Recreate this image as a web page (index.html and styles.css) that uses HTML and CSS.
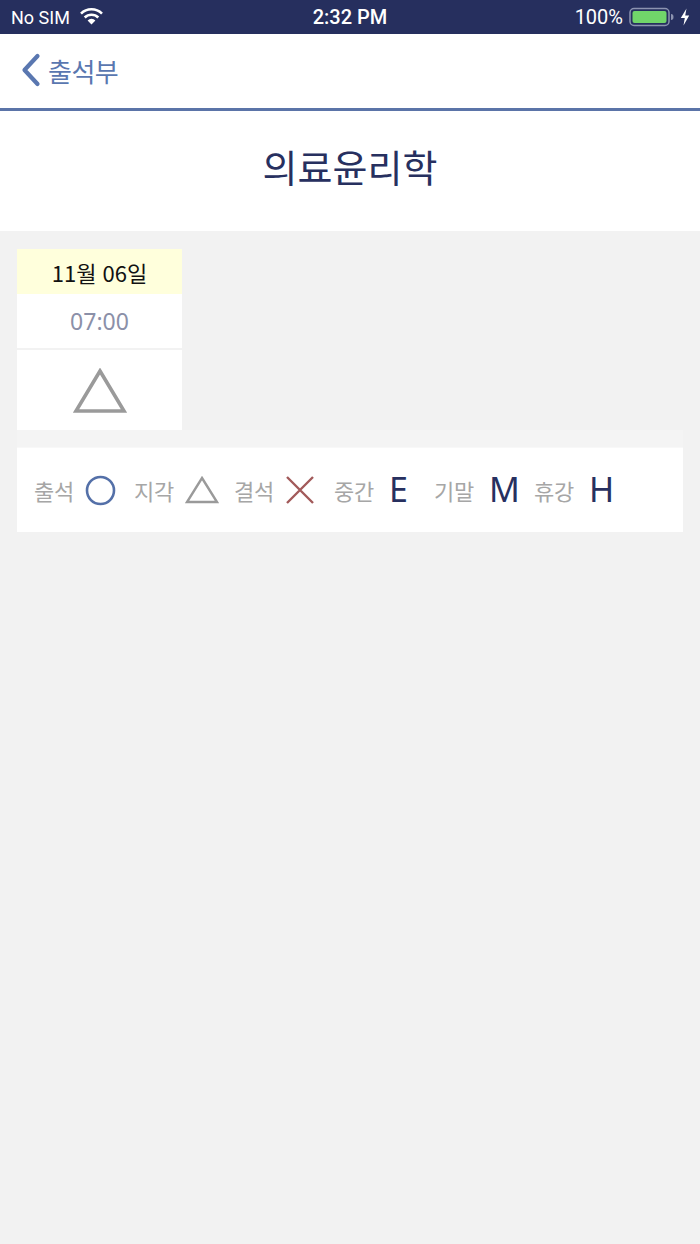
FILE: index.html
```html
<!DOCTYPE html>
<html lang="ko">
<head>
<meta charset="utf-8">
<title>출석부</title>
<link rel="stylesheet" href="styles.css">
</head>
<body>
<div class="screen">
  <div class="status">
    <div class="status-left">
      <span>No SIM</span>
      <svg class="wifi" width="25" height="18" viewBox="0 0 25 18">
        <path d="M12.5 17.5 L8.6 13.4 A5.6 5.6 0 0 1 16.4 13.4 Z" fill="#fff"/>
        <path d="M5.7 10.5 A9.7 9.7 0 0 1 19.3 10.5" fill="none" stroke="#fff" stroke-width="2.6"/>
        <path d="M2 6.6 A15 15 0 0 1 23 6.6" fill="none" stroke="#fff" stroke-width="2.6"/>
      </svg>
    </div>
    <div class="status-time">2:32 PM</div>
    <div class="status-right">
      <span class="pct">100%</span>
      <svg width="46" height="20" viewBox="0 0 46 20">
        <rect x="1" y="1.5" width="39" height="17" rx="4" fill="none" stroke="#8c93b0" stroke-width="1.5"/>
        <rect x="3.5" y="4" width="34" height="12" rx="2" fill="#71d56a"/>
        <path d="M42 7 Q44.5 7 44.5 10 Q44.5 13 42 13 Z" fill="#8c93b0"/>
      </svg>
      <svg width="10" height="18" viewBox="0 0 10 18">
        <path d="M6.5 0.5 L0.8 10 L4.8 10 L3.5 17.5 L9.2 7.5 L5.2 7.5 Z" fill="#fff"/>
      </svg>
    </div>
  </div>
  <div class="nav">
    <svg class="chev" width="22" height="34" viewBox="0 0 22 34">
      <path d="M17.5 3 L4.5 17 L17.5 31" fill="none" stroke="#5a77b0" stroke-width="4.2" stroke-linecap="round" stroke-linejoin="round"/>
    </svg>
    <span class="nav-title">출석부</span>
  </div>
  <div class="title">의료윤리학</div>
  <div class="content">
    <div class="card">
      <div class="card-date">11월 06일</div>
      <div class="card-time">07:00</div>
      <div class="card-mark">
        <svg width="54" height="46" viewBox="0 0 54 46">
          <path d="M27 3 L51 43 L3 43 Z" fill="none" stroke="#9a9a9a" stroke-width="3.6" stroke-linejoin="miter"/>
        </svg>
      </div>
    </div>
    <div class="band"></div>
    <div class="legend">
      <div class="item"><span class="lbl">출석</span>
        <svg width="31" height="31" viewBox="0 0 31 31"><circle cx="15.5" cy="15.5" r="13.5" fill="none" stroke="#5470a8" stroke-width="2.6"/></svg>
      </div>
      <div class="item"><span class="lbl">지각</span>
        <svg width="34" height="28" viewBox="0 0 34 28"><path d="M17 2 L32 26 L2 26 Z" fill="none" stroke="#9a9a9a" stroke-width="2.4"/></svg>
      </div>
      <div class="item"><span class="lbl">결석</span>
        <svg width="30" height="30" viewBox="0 0 30 30"><path d="M2 2 L28 28 M28 2 L2 28" fill="none" stroke="#a25a5a" stroke-width="2.4"/></svg>
      </div>
      <div class="item"><span class="lbl">중간</span><span class="letter">E</span></div>
      <div class="item"><span class="lbl">기말</span><span class="letter">M</span></div>
      <div class="item"><span class="lbl">휴강</span><span class="letter">H</span></div>
    </div>
  </div>
</div>
</body>
</html>
```

FILE: styles.css
```css
* { box-sizing: border-box; }
html, body { margin: 0; padding: 0; }
body {
  width: 700px;
  height: 1244px;
  background: #f2f2f2;
  font-family: "Noto Sans CJK KR", "Noto Sans", sans-serif;
  overflow: hidden;
}
.screen { display: flex; flex-direction: column; height: 1244px; }

.status {
  height: 34px;
  background: #262f5e;
  color: #fff;
  display: flex;
  align-items: center;
  justify-content: space-between;
  padding: 0 10px 0 11px;
  font-family: Roboto, "Liberation Sans", sans-serif;
  font-size: 18px;
  position: relative;
}
.status-left { display: flex; align-items: center; gap: 9px; }
.wifi { margin-top: -2px; }
.status-time {
  position: absolute;
  left: 0; right: 0;
  text-align: center;
  font-weight: 500;
  font-size: 20px;
  pointer-events: none;
}
.status-right { display: flex; align-items: center; gap: 5px; }
.pct { font-size: 20px; margin-right: 1px; }

.nav {
  height: 77px;
  background: #fff;
  border-bottom: 3px solid #5b74a8;
  display: flex;
  align-items: center;
  padding-left: 20px;
  padding-bottom: 2px;
  gap: 6px;
}
.nav-title { font-size: 26px; color: #5a77b0; letter-spacing: -0.5px; }

.title {
  height: 120px;
  background: #fff;
  display: flex;
  align-items: center;
  justify-content: center;
  font-size: 38px;
  color: #27305f;
  padding-bottom: 12px;
}

.content {
  padding: 18px 17px;
  display: flex;
  flex-direction: column;
}
.card { width: 165px; background: #fff; display: flex; flex-direction: column; }
.card-date {
  height: 45px;
  background: #ffffdc;
  display: flex;
  align-items: center;
  justify-content: center;
  font-size: 22px;
  color: #111;
}
.card-time {
  height: 56px;
  display: flex;
  align-items: center;
  justify-content: center;
  font-size: 23px;
  color: #8b90a8;
  font-family: "Noto Sans", sans-serif;
  border-bottom: 2px solid #f2f2f2;
}
.card-mark {
  height: 80px;
  display: flex;
  align-items: center;
  justify-content: center;
  padding-top: 2px;
}

.band { height: 17px; background: #f4f4f4; }
.legend {
  height: 85px;
  background: #fff;
  border-top: 1px solid #f8f8f8;
  display: flex;
  align-items: center;
  padding-left: 17px;
}
.item { width: 100px; display: flex; align-items: center; gap: 11px; }
.lbl { font-size: 22px; color: #a6a6a6; letter-spacing: -0.3px; }
.letter {
  font-family: "Noto Sans", sans-serif;
  font-size: 34px;
  color: #27305f;
  line-height: 1;
  margin-left: 4px;
  margin-top: -2px;
}
```
